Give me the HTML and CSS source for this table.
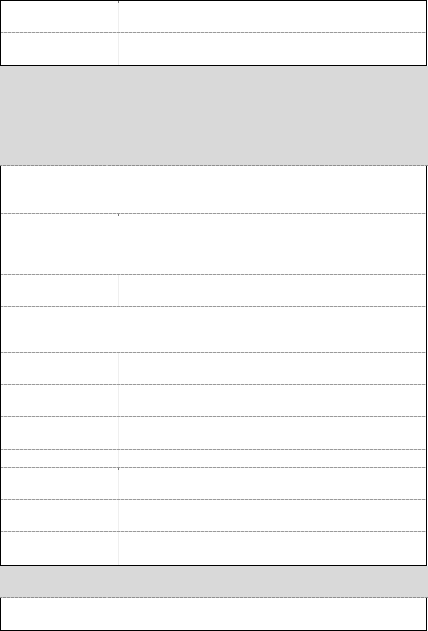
FILE: index.html
```html
<!DOCTYPE html>
<html>
<head>
<meta charset="utf-8">
<link rel="stylesheet" href="styles.css">
</head>
<body>
<div class="page">
  <div class="box box-top">
    <div class="row h31 split"><div class="k"></div><div class="v"><span class="mark"></span></div></div>
    <div class="row h32 split last"><div class="k"></div><div class="v"></div></div>
  </div>
  <div class="band band-tall"></div>
  <div class="box box-mid">
    <div class="row h47"></div>
    <div class="row h60"><span class="mark mark-mid"></span></div>
    <div class="row h31 split"><div class="k"></div><div class="v"></div></div>
    <div class="row h45"></div>
    <div class="row h31 split"><div class="k"></div><div class="v"></div></div>
    <div class="row h31 split"><div class="k"></div><div class="v"></div></div>
    <div class="row h32 split"><div class="k"></div><div class="v"></div></div>
    <div class="row h17 split"><div class="k"></div><div class="v"></div></div>
    <div class="row h31 split"><div class="k"></div><div class="v"><span class="mark"></span></div></div>
    <div class="row h31 split"><div class="k"></div><div class="v"></div></div>
    <div class="row h33 split last"><div class="k"></div><div class="v"></div></div>
  </div>
  <div class="band band-short"></div>
  <div class="box box-bottom">
    <div class="row h32 last"></div>
  </div>
</div>
</body>
</html>
```
FILE: styles.css
```css
html, body {
  margin: 0;
  padding: 0;
  background: #fff;
  font-family: "Liberation Sans", Arial, sans-serif;
}
.page {
  width: 428px;
  height: 631px;
  overflow: hidden;
}
.box {
  width: 427px;
  box-sizing: border-box;
  border-left: 1px solid #000;
  border-right: 1px solid #000;
  border-bottom: 1px solid #000;
}
.box-top {
  border-top: 1px solid #000;
}
.row {
  position: relative;
  box-sizing: content-box;
  border-bottom: 1px solid #a0a0a0;
  border-image: repeating-linear-gradient(90deg, #9a9a9a 0 3px, #d4d4d4 3px 4px) 1;
}
.row.last {
  border-bottom: none;
}
.split {
  display: flex;
}
.k {
  width: 117px;
  flex: none;
}
.v {
  position: relative;
  flex: 1;
  border-left: 1px solid #efefef;
}
.mark {
  position: absolute;
  left: -1px;
  top: 0;
  width: 1px;
  height: 2px;
  background: #777;
}
.mark-mid {
  left: 117px;
}
.h17 { height: 17px; }
.h31 { height: 31px; }
.h32 { height: 32px; }
.h33 { height: 33px; }
.h45 { height: 45px; }
.h47 { height: 47px; }
.h60 { height: 60px; }
.band {
  width: 428px;
  background: #d9d9d9;
  border-bottom: 1px solid #a0a0a0;
  border-image: repeating-linear-gradient(90deg, #8f8f8f 0 3px, #c4c4c4 3px 4px) 1;
}
.band-tall { height: 99px; }
.band-short { height: 31px; }
```
